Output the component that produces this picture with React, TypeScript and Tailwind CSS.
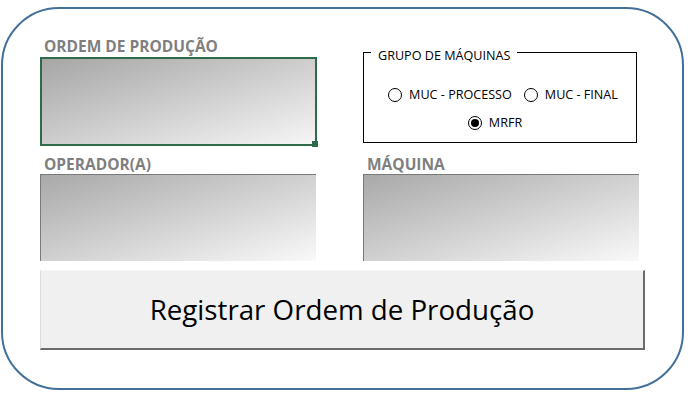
import React from "react";

function Radio({ label, checked = false }: { label: string; checked?: boolean }) {
  return (
    <label className="flex items-center gap-[7px]">
      <span className="flex h-[14px] w-[14px] items-center justify-center rounded-full border border-black bg-white">
        {checked && <span className="h-[8px] w-[8px] rounded-full bg-black" />}
      </span>
      <span className="text-[12.6px] leading-[16px] text-black">{label}</span>
    </label>
  );
}

function Field({ label, active = false }: { label: string; active?: boolean }) {
  return (
    <div className="flex flex-col">
      <div className="h-[20px] pl-[4px] text-[15.5px] font-bold leading-[20px] text-[#7f7f7f]">{label}</div>
      {active ? (
        <div className="relative mt-[1px] h-[89px] w-[277px] border-2 border-[#2f6b4b] bg-linear-to-br from-[#a6a6a6] to-[#f6f6f6]">
          <span className="absolute -bottom-[3px] -right-[3px] h-[6px] w-[6px] bg-[#2f6b4b]" />
        </div>
      ) : (
        <div className="h-[87px] w-[276px] border-l border-t border-[#7a7a7a] bg-linear-to-br from-[#a9a9a9] to-[#f9f9f9]" />
      )}
    </div>
  );
}

export default function App() {
  return (
    <div className="h-[403px] w-[693px] bg-white pl-[1px] pt-[7px]" style={{ fontFamily: '"Open Sans", "Noto Sans", sans-serif' }}>
      <div className="h-[383px] w-[683px] rounded-[58px] border-2 border-[#43709a] pl-[37px] pt-[27px]">
        <div className="grid grid-cols-[276px_276px] gap-x-[47px]">
          <Field label="ORDEM DE PRODUÇÃO" active />

          <div className="relative mt-[16px] h-[91px] w-[274px] border border-black">
            <span className="absolute left-[7px] top-[-5px] bg-white px-[7px] text-[12.6px] leading-[16px] text-black">
              GRUPO DE MÁQUINAS
            </span>
            <div className="flex flex-col items-center pt-[34px]">
              <div className="ml-[6px] flex items-center gap-[12px]">
                <Radio label="MUC - PROCESSO" />
                <Radio label="MUC - FINAL" />
              </div>
              <div className="mt-[12px] ml-[-10px]">
                <Radio label="MRFR" checked />
              </div>
            </div>
          </div>

          <div className="mt-[8px]">
            <Field label="OPERADOR(A)" />
          </div>
          <div className="mt-[8px]">
            <Field label="MÁQUINA" />
          </div>
        </div>

        <button className="mt-[9px] flex h-[80px] w-[605px] items-center justify-center border-b-2 border-l border-r-2 border-t border-b-[#6b6b6b] border-l-[#dcdcdc] border-r-[#6b6b6b] border-t-[#f5f5f5] bg-[#f0f0f0] text-[27.7px] text-black">
          Registrar Ordem de Produção
        </button>
      </div>
    </div>
  );
}
